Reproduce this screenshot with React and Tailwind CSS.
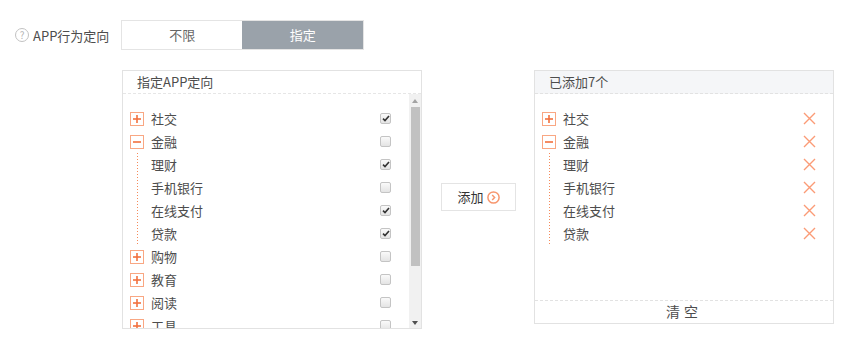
import React from 'react';

const FONT = { fontFamily: '"Noto Sans CJK SC", "Noto Sans", sans-serif' };

const tree = [
  { name: '社交', checked: true },
  {
    name: '金融',
    checked: false,
    open: true,
    children: [
      { name: '理财', checked: true },
      { name: '手机银行', checked: false },
      { name: '在线支付', checked: true },
      { name: '贷款', checked: true },
    ],
  },
  { name: '购物', checked: false },
  { name: '教育', checked: false },
  { name: '阅读', checked: false },
  { name: '工具', checked: false },
];

const added = [
  { name: '社交' },
  {
    name: '金融',
    open: true,
    children: [{ name: '理财' }, { name: '手机银行' }, { name: '在线支付' }, { name: '贷款' }],
  },
];

function Toggle({ open }) {
  return (
    <span className="w-[14px] h-[14px] border border-[#f9a783] flex items-center justify-center shrink-0">
      <svg width="8" height="8" viewBox="0 0 8 8">
        <path d="M0 4h8" stroke="#f2703e" strokeWidth="1.6" />
        {!open && <path d="M4 0v8" stroke="#f2703e" strokeWidth="1.6" />}
      </svg>
    </span>
  );
}

function Checkbox({ checked }) {
  return (
    <span className="w-[11px] h-[11px] rounded-[2px] border border-[#c4c4c4] bg-gradient-to-b from-[#fafafa] to-[#e4e4e4] flex items-center justify-center">
      {checked && (
        <svg width="8" height="7" viewBox="0 0 8 7">
          <path d="M1 3.6L3 5.6L7 1" fill="none" stroke="#333" strokeWidth="1.6" />
        </svg>
      )}
    </span>
  );
}

function Cross() {
  return (
    <svg width="13" height="13" viewBox="0 0 13 13">
      <path d="M1 1L12 12M12 1L1 12" stroke="#fb9b76" strokeWidth="1.4" />
    </svg>
  );
}

function Row({ item, toggle, right }) {
  return (
    <div className="h-[23px] flex items-center">
      {toggle ? <Toggle open={item.open} /> : <span className="w-[14px] shrink-0" />}
      <span className="ml-[7px] flex-1 text-[13px] text-[#4d4d4d] leading-none">{item.name}</span>
      {right}
    </div>
  );
}

function TreeList({ items, renderRight }) {
  return (
    <div className="pl-[7px]">
      {items.map((item) => (
        <div key={item.name}>
          <Row item={item} toggle right={renderRight(item)} />
          {item.open && (
            <div className="flex">
              {/* dotted guide line */}
              <div className="ml-[7px] w-px bg-[repeating-linear-gradient(to_bottom,#f58a5a_0_1px,transparent_1px_3px)]" />
              <div className="-ml-[8px] flex-1">
                {item.children.map((c) => (
                  <Row key={c.name} item={c} right={renderRight(c)} />
                ))}
              </div>
            </div>
          )}
        </div>
      ))}
    </div>
  );
}

export default function App() {
  return (
    <div className="w-[850px] h-[341px] bg-white pt-[20px]" style={FONT}>
      {/* behaviour targeting */}
      <div className="flex items-center pl-[15px]">
        <span className="w-[14px] h-[14px] rounded-full border border-[#c2c2c2] text-[#b5b5b5] text-[10px] leading-none flex items-center justify-center">
          ?
        </span>
        <span className="ml-[4px] text-[13px] text-[#4d4d4d] leading-none">APP行为定向</span>
        <div className="ml-[12px] flex h-[30px] border border-[#e4e4e4]">
          <div className="w-[120px] flex items-center justify-center text-[13px] text-[#666]">不限</div>
          <div className="w-[121px] flex items-center justify-center text-[13px] text-white bg-[#9aa2aa]">指定</div>
        </div>
      </div>

      <div className="flex items-start mt-[20px] pl-[122px]">
        {/* available */}
        <div className="w-[300px] h-[259px] border border-[#e2e2e2] flex flex-col">
          <div className="h-[23px] border-b border-dashed border-[#e6e6e6] px-[14px] flex items-center text-[13px] text-[#4d4d4d]">
            指定APP定向
          </div>
          <div className="flex flex-1 overflow-hidden">
            <div className="flex-1 pt-[13px] pr-[18px] overflow-hidden">
              <TreeList items={tree} renderRight={(it) => <Checkbox checked={it.checked} />} />
            </div>
            <div className="w-[12px] bg-[#f1f1f1] flex flex-col items-center pt-[5px] pb-[3px]">
              <svg width="6" height="4" viewBox="0 0 6 4">
                <path d="M0 4L3 0L6 4Z" fill="#a3a3a3" />
              </svg>
              <div className="w-[9px] h-[159px] mt-[4px] bg-[#c1c1c1]" />
              <div className="flex-1" />
              <svg width="6" height="4" viewBox="0 0 6 4">
                <path d="M0 0L3 4L6 0Z" fill="#505050" />
              </svg>
            </div>
          </div>
        </div>

        <button className="mt-[113px] ml-[19px] w-[75px] h-[28px] border border-[#e4e4e4] bg-white flex items-center justify-center gap-[3px] text-[13px] text-[#333]">
          添加
          <svg width="13" height="13" viewBox="0 0 13 13">
            <circle cx="6.5" cy="6.5" r="5.6" fill="none" stroke="#f7976f" strokeWidth="1.5" />
            <path d="M5.2 4L7.6 6.5L5.2 9" fill="none" stroke="#f7976f" strokeWidth="1.5" />
          </svg>
        </button>

        {/* selected */}
        <div className="ml-[18px] w-[300px] h-[254px] border border-[#e2e2e2] flex flex-col">
          <div className="h-[23px] bg-[#f5f6f8] border-b border-dashed border-[#e2e2e2] px-[14px] flex items-center text-[13px] text-[#4d4d4d]">
            已添加7个
          </div>
          <div className="flex-1 pt-[13px] pr-[17px]">
            <TreeList items={added} renderRight={() => <Cross />} />
          </div>
          <div className="h-[23px] border-t border-dashed border-[#e2e2e2] flex items-center justify-center text-[14px] text-[#4d4d4d] tracking-[4px] pb-[2px]">
            清空
          </div>
        </div>
      </div>
    </div>
  );
}
